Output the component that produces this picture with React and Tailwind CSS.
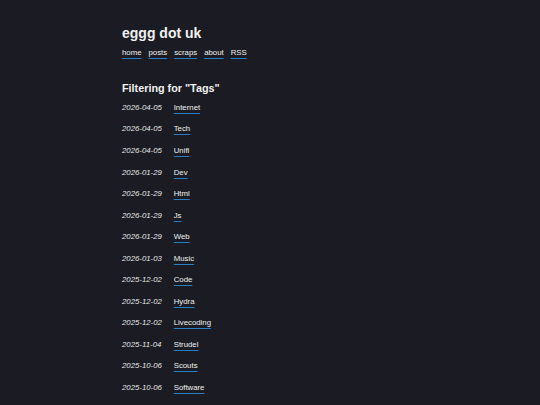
import React from 'react';

const nav = ['home', 'posts', 'scraps', 'about', 'RSS'];

const rows = [
  ['2026-04-05', 'Internet'],
  ['2026-04-05', 'Tech'],
  ['2026-04-05', 'Unifi'],
  ['2026-01-29', 'Dev'],
  ['2026-01-29', 'Html'],
  ['2026-01-29', 'Js'],
  ['2026-01-29', 'Web'],
  ['2026-01-03', 'Music'],
  ['2025-12-02', 'Code'],
  ['2025-12-02', 'Hydra'],
  ['2025-12-02', 'Livecoding'],
  ['2025-11-04', 'Strudel'],
  ['2025-10-06', 'Scouts'],
  ['2025-10-06', 'Software'],
];

const linkCls =
  'underline decoration-[#2a7cc0] decoration-[1.3px] underline-offset-[2.5px] text-[#f0f0f0]';

export default function App() {
  return (
    <div
      className="min-h-screen bg-[#1b1c23] text-[#f0f0f0]"
      style={{ fontFamily: '"Liberation Sans", Arial, sans-serif' }}
    >
      <div className="mx-auto w-[296px] pt-[25px]">
        <h1 className="text-[14px] leading-[17px] font-bold">eggg dot uk</h1>
        <nav className="mt-[6px] flex gap-[7px] text-[7.8px] leading-[10px]">
          {nav.map((n) => (
            <a key={n} href="#" className={linkCls}>
              {n}
            </a>
          ))}
        </nav>

        <h2 className="mt-[24px] text-[10.8px] leading-[13px] font-bold">
          Filtering for "Tags"
        </h2>

        <ul className="mt-[2px]">
          {rows.map(([d, t], i) => (
            <li key={i} className="flex items-center h-[21.55px] text-[7.8px]">
              <span className="italic w-[51.7px] text-[#e6e6e6]">{d}</span>
              <a href="#" className={linkCls}>
                {t}
              </a>
            </li>
          ))}
        </ul>
      </div>
    </div>
  );
}
